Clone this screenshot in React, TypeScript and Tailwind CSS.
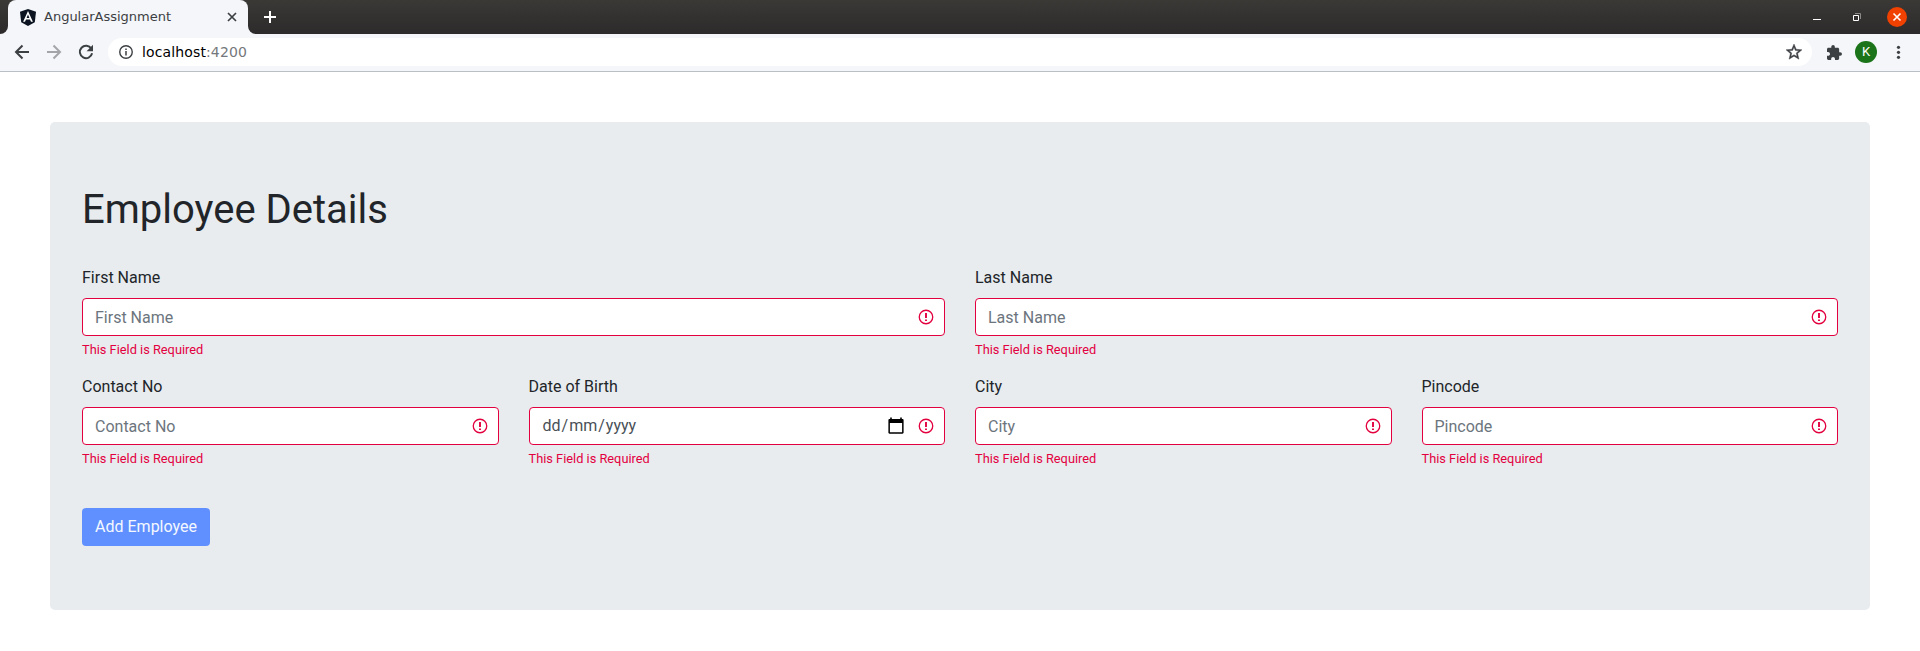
import React from "react";

function ErrorIcon() {
  return (
    <svg className="h-[16px] w-[16px] shrink-0" viewBox="0 0 16 16" fill="none">
      <circle cx="8" cy="8" r="6.75" stroke="#e3003f" strokeWidth="1.3" />
      <path d="M8 4v5" stroke="#e3003f" strokeWidth="1.9" />
      <path d="M8 10.5v1.5" stroke="#e3003f" strokeWidth="1.9" />
    </svg>
  );
}

function CalendarIcon() {
  return (
    <svg className="mr-[14px] h-[18px] w-[16px] shrink-0" viewBox="0 0 16 18">
      <path
        fill="#000"
        fillRule="evenodd"
        d="M2.2 0.5h1.6v1.4h8.4V0.5h1.6v1.4h0.6c0.8 0 1.2 0.5 1.2 1.1v12.6c0 0.7-0.5 1.1-1.2 1.1H1.6c-0.8 0-1.2-0.5-1.2-1.1V3c0-0.7 0.5-1.1 1.2-1.1h0.6zM1.9 5.9v9.4h12.2V5.9z"
      />
    </svg>
  );
}

function Field({ label, date = false }: { label: string; date?: boolean }) {
  return (
    <div className="min-w-0">
      <label className="mb-2 block text-[16px] leading-6 text-[#212529]">{label}</label>
      <div className="flex h-[38px] items-center rounded-[4px] border border-[#e3003f] bg-white pr-[10px] pl-3 text-[16px] leading-6">
        {date ? (
          <span className="flex-1 text-[#495057]">
            <span className="px-px">dd</span>/<span className="px-px">mm</span>/<span className="px-px">yyyy</span>
          </span>
        ) : (
          <span className="flex-1 pt-[2px] text-[#6c757d]">{label}</span>
        )}
        {date && <CalendarIcon />}
        <ErrorIcon />
      </div>
      <div className="mt-1 text-[12.8px] leading-[19.2px] text-[#e3003f]">This Field is Required</div>
    </div>
  );
}

function TabStrip() {
  return (
    <div className="flex h-[34px] bg-linear-to-b from-[#3a3936] to-[#2d2a2b]">
      <div className="flex w-2 items-end bg-[#f4f6f9]">
        <div className="h-full w-2 rounded-br-[8px] bg-linear-to-b from-[#3a3936] to-[#2d2a2b]" />
      </div>
      <div className="flex w-[240px] items-center rounded-t-[8px] bg-[#f4f6f9] pr-[10px] pl-[12px]">
        <svg className="h-[17px] w-[16px]" viewBox="0 0 16 17">
          <path fill="#0b1420" d="M8 0l8 2.8-1.2 10.4L8 17l-6.8-3.8L0 2.8z" />
          <path fill="#fff" fillRule="evenodd" d="M8 2l4.9 10.8h-1.9l-1-2.4H6l-1 2.4H3.1zM8 5.4L6.6 8.9h2.8z" />
        </svg>
        <span className="ml-2 flex-1 font-['DejaVu_Sans'] text-[13px] text-[#3c4043]">AngularAssignment</span>
        <svg className="h-3 w-3" viewBox="0 0 12 12" stroke="#3c4043" strokeWidth="1.7">
          <path d="M2 2l8 8M10 2l-8 8" />
        </svg>
      </div>
      <div className="w-2 bg-[#f4f6f9]">
        <div className="h-full w-2 rounded-bl-[8px] bg-linear-to-b from-[#3a3936] to-[#2d2a2b]" />
      </div>
      <div className="flex flex-1 items-center pl-2">
        <svg className="h-3 w-3" viewBox="0 0 12 12" stroke="#fff" strokeWidth="2">
          <path d="M6 0v12M0 6h12" />
        </svg>
      </div>
      <div className="flex items-center pr-[13px]">
        <svg className="mr-8 h-[34px] w-2" viewBox="0 0 8 34">
          <path fill="#fff" d="M0 19h8v1H0z" />
        </svg>
        <svg className="mr-[26px] h-[34px] w-2" viewBox="0 0 8 34" fill="none">
          <path d="M2 13.5h5.500v5.500" stroke="#8b8a88" />
          <path d="M.5 15.500h5v5h-5z" stroke="#fff" />
        </svg>
        <svg className="h-5 w-5" viewBox="0 0 20 20">
          <circle cx="10" cy="10" r="10" fill="#f04100" />
          <path d="M6.500 6.500l7 7M13.500 6.500l-7 7" stroke="#fff" strokeWidth="1.600" />
        </svg>
      </div>
    </div>
  );
}

function Toolbar() {
  return (
    <div className="flex h-[38px] items-start border-b border-[#b9c0c5] bg-[#f4f6f9] pt-1">
      <div className="flex h-7 w-[108px] items-center pl-[14px]">
        <svg className="h-4 w-4" viewBox="0 0 16 16" fill="none" stroke="#3c4043" strokeWidth="2">
          <path d="M15 8H2.500M8.500 1.500L2 8l6.500 6.500" />
        </svg>
        <svg className="ml-4 h-4 w-4" viewBox="0 0 16 16" fill="none" stroke="#a3a5a8" strokeWidth="2">
          <path d="M1 8h12.500M7.500 1.500L14 8l-6.500 6.500" />
        </svg>
        <svg className="ml-4 h-4 w-4" viewBox="0 0 16 16" fill="none">
          <path d="M13.300 4.600A6.200 6.200 0 1 0 14.100 9.300" stroke="#3c4043" strokeWidth="2" />
          <path fill="#3c4043" d="M15 .8v6.400H8.600z" />
        </svg>
      </div>
      <div className="flex h-7 flex-1 items-center rounded-full bg-white pr-[10px] pl-[11px]">
        <svg className="h-[14px] w-[14px]" viewBox="0 0 14 14" fill="none">
          <circle cx="7" cy="7" r="6.250" stroke="#3c4043" strokeWidth="1.400" />
          <path d="M7 6v4.500M7 3.400v1.600" stroke="#3c4043" strokeWidth="1.500" />
        </svg>
        <span className="ml-[9px] flex-1 font-['DejaVu_Sans'] text-[14px] tracking-[0.13px] text-black">
          localhost<span className="text-[#74777b]">:4200</span>
        </span>
        <svg className="h-4 w-4" viewBox="2 2 20 20" fill="#3c4043" stroke="#3c4043" strokeWidth=".5">
          <path d="M22 9.240l-7.190-.62L12 2 9.190 8.630 2 9.240l5.460 4.730L5.820 21 12 17.270 18.180 21l-1.630-7.030L22 9.240zM12 15.400l-3.760 2.270 1-4.280-3.320-2.880 4.380-.38L12 6.100l1.710 4.040 4.380.38-3.320 2.880 1 4.280L12 15.400z" />
        </svg>
      </div>
      <div className="flex h-7 w-[108px] items-center pl-[15px]">
        <svg className="h-[15px] w-[15px]" viewBox="2 1 21 21" fill="#3c4043">
          <path d="M20.500 11H19V7c0-1.100-.9-2-2-2h-4V3.500a2.500 2.500 0 0 0-5 0V5H4c-1.100 0-1.990.9-1.990 2v3.800H3.500c1.490 0 2.700 1.210 2.700 2.700s-1.210 2.700-2.700 2.700H2V20c0 1.100.9 2 2 2h3.800v-1.500c0-1.490 1.210-2.700 2.700-2.700s2.700 1.210 2.700 2.700V22H17c1.100 0 2-.9 2-2v-4h1.500a2.500 2.500 0 0 0 0-5z" />
        </svg>
        <div className="ml-[13px] flex h-[22px] w-[22px] items-center justify-center rounded-full bg-[#1b7419] font-[Roboto] text-[13px] text-white">K</div>
        <svg className="ml-[17px] h-4 w-4" viewBox="0 0 16 16" fill="#3c4043">
          <circle cx="4.500" cy="3.300" r="1.600" />
          <circle cx="4.500" cy="8.300" r="1.600" />
          <circle cx="4.500" cy="13.300" r="1.600" />
        </svg>
      </div>
    </div>
  );
}

export default function App() {
  return (
    <div className="h-[651px] w-full overflow-hidden bg-white font-[Roboto,sans-serif]">
      <TabStrip />
      <Toolbar />
      <main className="mx-[50px] mt-[50px] h-[488px] rounded-[5px] bg-[#e8ecef] px-8 py-16">
        <h1 className="mb-8 text-[40px] leading-[48px] font-normal text-[#212529]">Employee Details</h1>
        <div className="grid grid-cols-2 gap-x-[30px]">
          <Field label="First Name" />
          <Field label="Last Name" />
        </div>
        <div className="mt-4 grid grid-cols-4 gap-x-[30px]">
          <Field label="Contact No" />
          <Field label="Date of Birth" date />
          <Field label="City" />
          <Field label="Pincode" />
        </div>
        <button className="mt-[39.600px] block h-[38px] w-[128px] rounded-[4px] bg-[#6090ff] text-center text-[16px] leading-6 text-[#f4f8ff]">
          Add Employee
        </button>
      </main>
    </div>
  );
}
